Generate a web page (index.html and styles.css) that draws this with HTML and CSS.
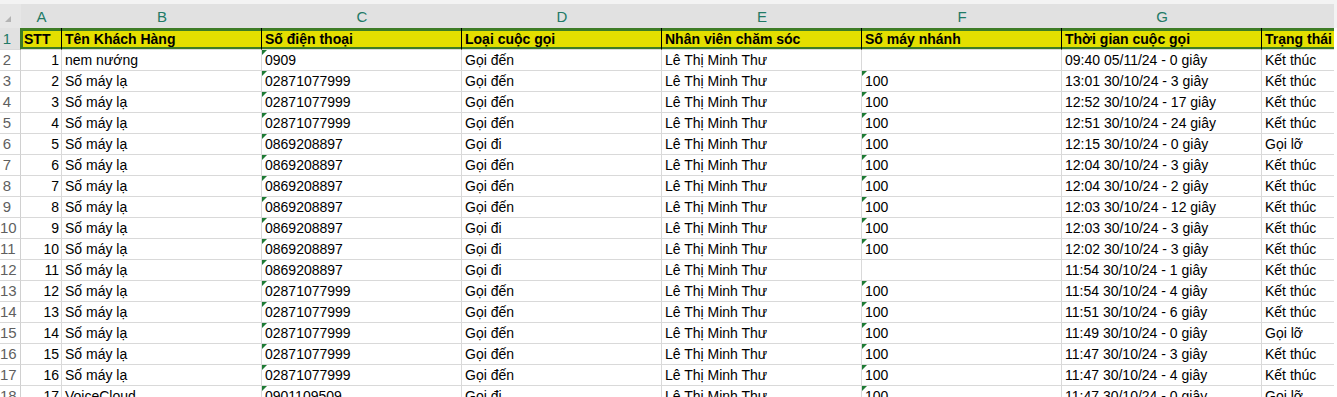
FILE: index.html
```html
<!DOCTYPE html>
<html lang="vi">
<head>
<meta charset="utf-8">
<title>Danh sách cuộc gọi</title>
<link rel="stylesheet" href="styles.css">
</head>
<body>
<div class="sheet">
  <div class="strip"></div>
  <table class="grid">
    <colgroup>
      <col class="c-rh"><col class="c-a"><col class="c-w"><col class="c-w"><col class="c-w"><col class="c-w"><col class="c-w"><col class="c-w"><col class="c-w">
    </colgroup>
    <thead>
      <tr class="colhead">
        <th class="corner"><span class="corner-tri"></span></th>
        <th>A</th><th>B</th><th>C</th><th>D</th><th>E</th><th>F</th><th>G</th><th>H</th>
      </tr>
    </thead>
    <tbody>
      <tr class="sel">
        <td class="rh">1</td>
        <td class="first">STT</td><td>Tên Khách Hàng</td><td>Số điện thoại</td><td>Loại cuộc gọi</td><td>Nhân viên chăm sóc</td><td>Số máy nhánh</td><td>Thời gian cuộc gọi</td><td>Trạng thái</td>
      </tr>
      <tr><td class="rh">2</td><td class="num">1</td><td>nem nướng</td><td class="flag">0909</td><td>Gọi đến</td><td>Lê Thị Minh Thư</td><td></td><td>09:40 05/11/24 - 0 giây</td><td>Kết thúc</td></tr>
      <tr><td class="rh">3</td><td class="num">2</td><td>Số máy lạ</td><td class="flag">02871077999</td><td>Gọi đến</td><td>Lê Thị Minh Thư</td><td class="flag">100</td><td>13:01 30/10/24 - 3 giây</td><td>Kết thúc</td></tr>
      <tr><td class="rh">4</td><td class="num">3</td><td>Số máy lạ</td><td class="flag">02871077999</td><td>Gọi đến</td><td>Lê Thị Minh Thư</td><td class="flag">100</td><td>12:52 30/10/24 - 17 giây</td><td>Kết thúc</td></tr>
      <tr><td class="rh">5</td><td class="num">4</td><td>Số máy lạ</td><td class="flag">02871077999</td><td>Gọi đến</td><td>Lê Thị Minh Thư</td><td class="flag">100</td><td>12:51 30/10/24 - 24 giây</td><td>Kết thúc</td></tr>
      <tr><td class="rh">6</td><td class="num">5</td><td>Số máy lạ</td><td class="flag">0869208897</td><td>Gọi đi</td><td>Lê Thị Minh Thư</td><td class="flag">100</td><td>12:15 30/10/24 - 0 giây</td><td>Gọi lỡ</td></tr>
      <tr><td class="rh">7</td><td class="num">6</td><td>Số máy lạ</td><td class="flag">0869208897</td><td>Gọi đến</td><td>Lê Thị Minh Thư</td><td class="flag">100</td><td>12:04 30/10/24 - 3 giây</td><td>Kết thúc</td></tr>
      <tr><td class="rh">8</td><td class="num">7</td><td>Số máy lạ</td><td class="flag">0869208897</td><td>Gọi đến</td><td>Lê Thị Minh Thư</td><td class="flag">100</td><td>12:04 30/10/24 - 2 giây</td><td>Kết thúc</td></tr>
      <tr><td class="rh">9</td><td class="num">8</td><td>Số máy lạ</td><td class="flag">0869208897</td><td>Gọi đến</td><td>Lê Thị Minh Thư</td><td class="flag">100</td><td>12:03 30/10/24 - 12 giây</td><td>Kết thúc</td></tr>
      <tr><td class="rh">10</td><td class="num">9</td><td>Số máy lạ</td><td class="flag">0869208897</td><td>Gọi đi</td><td>Lê Thị Minh Thư</td><td class="flag">100</td><td>12:03 30/10/24 - 3 giây</td><td>Kết thúc</td></tr>
      <tr><td class="rh">11</td><td class="num">10</td><td>Số máy lạ</td><td class="flag">0869208897</td><td>Gọi đi</td><td>Lê Thị Minh Thư</td><td class="flag">100</td><td>12:02 30/10/24 - 3 giây</td><td>Kết thúc</td></tr>
      <tr><td class="rh">12</td><td class="num">11</td><td>Số máy lạ</td><td class="flag">0869208897</td><td>Gọi đi</td><td>Lê Thị Minh Thư</td><td></td><td>11:54 30/10/24 - 1 giây</td><td>Kết thúc</td></tr>
      <tr><td class="rh">13</td><td class="num">12</td><td>Số máy lạ</td><td class="flag">02871077999</td><td>Gọi đến</td><td>Lê Thị Minh Thư</td><td class="flag">100</td><td>11:54 30/10/24 - 4 giây</td><td>Kết thúc</td></tr>
      <tr><td class="rh">14</td><td class="num">13</td><td>Số máy lạ</td><td class="flag">02871077999</td><td>Gọi đến</td><td>Lê Thị Minh Thư</td><td class="flag">100</td><td>11:51 30/10/24 - 6 giây</td><td>Kết thúc</td></tr>
      <tr><td class="rh">15</td><td class="num">14</td><td>Số máy lạ</td><td class="flag">02871077999</td><td>Gọi đến</td><td>Lê Thị Minh Thư</td><td class="flag">100</td><td>11:49 30/10/24 - 0 giây</td><td>Gọi lỡ</td></tr>
      <tr><td class="rh">16</td><td class="num">15</td><td>Số máy lạ</td><td class="flag">02871077999</td><td>Gọi đến</td><td>Lê Thị Minh Thư</td><td class="flag">100</td><td>11:47 30/10/24 - 3 giây</td><td>Kết thúc</td></tr>
      <tr><td class="rh">17</td><td class="num">16</td><td>Số máy lạ</td><td class="flag">02871077999</td><td>Gọi đến</td><td>Lê Thị Minh Thư</td><td class="flag">100</td><td>11:47 30/10/24 - 4 giây</td><td>Kết thúc</td></tr>
      <tr><td class="rh">18</td><td class="num">17</td><td>VoiceCloud</td><td class="flag">0901109509</td><td>Gọi đi</td><td>Lê Thị Minh Thư</td><td class="flag">100</td><td>11:47 30/10/24 - 0 giây</td><td>Gọi lỡ</td></tr>
    </tbody>
  </table>
</div>
</body>
</html>
```
FILE: styles.css
```css
html, body {
  margin: 0;
  padding: 0;
  height: 100%;
  overflow: hidden;
}
body {
  background: linear-gradient(#f3f3f3 0, #f3f3f3 28px, #ffffff 28px);
  font-family: "Liberation Sans", Arial, sans-serif;
  font-size: 14px;
  color: #000;
}
.sheet {
  width: 1334px;
  overflow: hidden;
}
.strip {
  height: 4px;
  background: #f3f3f3;
}
.grid {
  table-layout: fixed;
  border-collapse: separate;
  border-spacing: 0;
  width: 1461px;
}
.c-rh { width: 21px; }
.c-a { width: 41px; }
.c-w { width: 200px; }

.colhead th {
  height: 24px;
  padding: 0;
  background: #e1e1e1;
  color: #217a66;
  font-weight: normal;
  font-size: 15px;
  text-align: center;
  vertical-align: middle;
  box-sizing: border-box;
}
.colhead .corner {
  background: #e6e6e6;
  position: relative;
}
.corner-tri {
  position: absolute;
  left: 5px;
  top: 12px;
  width: 0;
  height: 0;
  border-left: 6px solid transparent;
  border-bottom: 6px solid #b3b3b3;
}

td {
  height: 21px;
  box-sizing: border-box;
  padding: 0 3px;
  border-right: 1px solid #d9d9d9;
  border-bottom: 1px solid #d9d9d9;
  white-space: nowrap;
  overflow: hidden;
  line-height: 20px;
  vertical-align: bottom;
  position: relative;
}
td.rh {
  padding: 0 6px 0 0;
  text-align: center;
  color: #5f5f5f;
  font-size: 15px;
  background: #ffffff;
  overflow: visible;
  border-right-color: #d0d0d0;
}
td.num {
  text-align: right;
  padding-right: 2px;
}
td.flag::before {
  content: "";
  position: absolute;
  left: 0;
  top: 0;
  width: 0;
  height: 0;
  border-top: 5px solid #1e7b34;
  border-right: 5px solid transparent;
}

.sel td {
  height: 22px;
  background: #e4df00;
  font-weight: bold;
  border-right-color: #000;
  border-bottom-color: #d9d9d9;
  box-shadow: inset 0 3px 0 #3e7c26, inset 0 -2px 0 #3e7c26;
  line-height: 20px;
  vertical-align: middle;
}
.sel td.first {
  box-shadow: inset 0 3px 0 #3e7c26, inset 0 -2px 0 #3e7c26, inset 2px 0 0 #3e7c26;
  padding-left: 3px;
}
.sel td.rh {
  background: #e1e1e1;
  color: #217a66;
  font-weight: normal;
  box-shadow: none;
  border-right-color: #3e7c26;
  border-bottom-color: #d9d9d9;
}
```
